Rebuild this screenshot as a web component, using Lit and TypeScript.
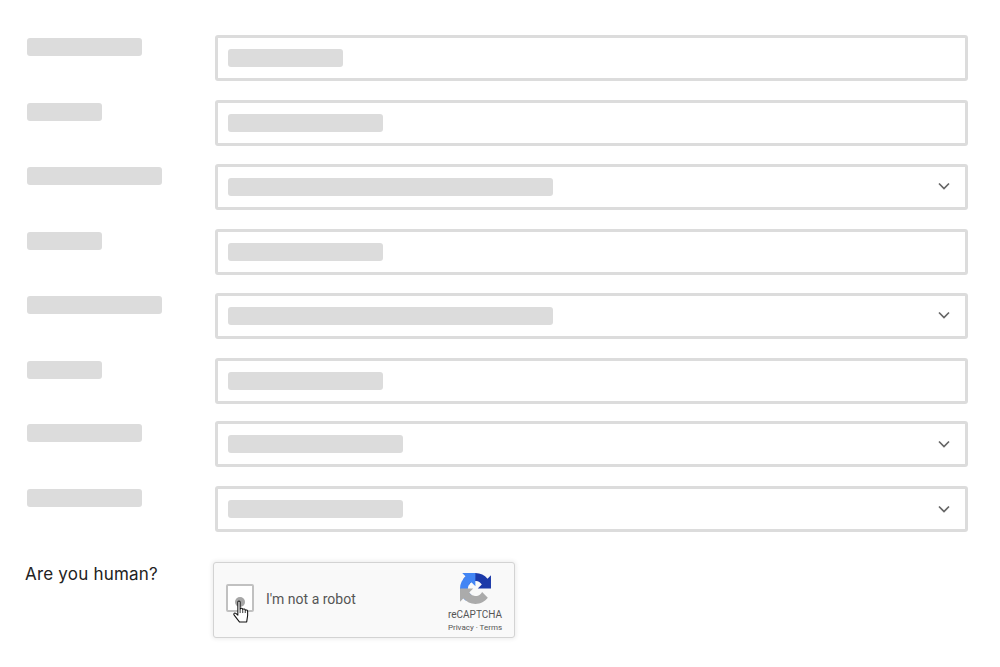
import { LitElement, html, css, svg } from "lit";
import { customElement } from "lit/decorators.js";
import { classMap } from "lit/directives/class-map.js";

interface Row { label: number; value: number; select: boolean; gap: number; low?: boolean }

const ROWS: Row[] = [
  { label: 115, value: 115, select: false, gap: 0 },
  { label: 75, value: 155, select: false, gap: 19 },
  { label: 135, value: 325, select: true, gap: 18 },
  { label: 75, value: 155, select: false, gap: 19 },
  { label: 135, value: 325, select: true, gap: 18 },
  { label: 75, value: 155, select: false, gap: 19 },
  { label: 115, value: 175, select: true, gap: 17, low: true },
  { label: 115, value: 175, select: true, gap: 19, low: true },
];

@customElement("app-root")
export class AppRoot extends LitElement {
  static styles = css`
    :host { display: block; background: #fff; height: 667px; overflow: hidden; font-family: "Roboto", sans-serif; }
    .form { padding: 35px 32px 0 27px; display: flex; flex-direction: column; }
    .row { display: grid; grid-template-columns: 188px 1fr; }
    .bar { display: block; height: 18px; background: #dcdcdc; border-radius: 3px; }
    .label { margin-top: 3px; }
    .field {
      box-sizing: border-box; height: 46px; border: 3px solid #dcdcdc; border-radius: 3px;
      padding-left: 10px; display: flex; align-items: center; justify-content: space-between;
    }
    .chev { width: 12px; height: 8px; margin: 0 15px 2px 0; flex: none; }
    .chev.low { margin-bottom: 0; }
    .human { display: grid; grid-template-columns: 188px auto; justify-content: start; padding: 30px 0 0 25px; }
    .q { font: 400 17px/20px "Inter", sans-serif; color: #222; margin-top: 2px; letter-spacing: 0.2px; }
    .captcha {
      box-sizing: border-box; width: 302px; height: 76px; background: #f9f9f9;
      border: 1px solid #d3d3d3; border-radius: 3px; box-shadow: 0 0 4px 1px rgba(0,0,0,0.08);
      display: flex; align-items: center; position: relative; padding-left: 12px;
    }
    .check { box-sizing: border-box; width: 28px; height: 28px; border: 2px solid #c1c1c1; border-radius: 2px; background: #fff; flex: none; margin-bottom: 4px; }
    .text { font: 400 14px/18px "Roboto", sans-serif; color: #555; margin: 0 0 2px 12px; }
    .dot { position: absolute; left: 21px; top: 34px; width: 10px; height: 10px; border-radius: 50%; background: #a6a6a6; }
    .hand { position: absolute; left: 18px; top: 37px; width: 20px; height: 24px; }
    .brand { position: absolute; right: 11px; top: 10px; width: 56px; display: flex; flex-direction: column; align-items: center; color: #555; }
    .logo { width: 31px; height: 31px; }
    .name { font: 400 10px/12px "Roboto", sans-serif; margin-top: 5px; }
    .links { font: 400 8px/10px "Roboto", sans-serif; margin-top: 2px; white-space: nowrap; }
  `;

  private chevron(low: boolean) {
    return html`<svg class=${classMap({ chev: true, low })} viewBox="0 0 12 8"><path d="M1 1.500 6 6.500 11 1.500" fill="none" stroke="#666" stroke-width="1.700"/></svg>`;
  }

  private logo() {
    return svg`<svg class="logo" viewBox="0 0 64 64">
      <path d="M64 31.955l-.033-1.37V4.687l-7.16 7.16C50.948 4.674 42.033.093 32.05.093c-10.4 0-19.622 4.96-25.458 12.64l11.736 11.86a15.55 15.55 0 0 1 4.754-5.334c2.05-1.6 4.952-2.906 8.968-2.906.485 0 .86.057 1.135.163 4.976.393 9.29 3.14 11.83 7.124l-8.307 8.307c10.522-.04 22.4-.066 27.295.005" fill="#1c3aa9"/>
      <path d="M31.862.094l-1.37.033H4.594l7.16 7.16C4.58 13.147 0 22.06 0 32.046c0 10.4 4.96 19.622 12.64 25.458l11.86-11.736a15.55 15.55 0 0 1-5.334-4.754c-1.6-2.05-2.906-4.952-2.906-8.968 0-.485.057-.86.163-1.135.393-4.976 3.14-9.29 7.124-11.83l8.307 8.307c-.04-10.522-.066-22.4.005-27.295" fill="#4285f4"/>
      <path d="M.001 32.045l.033 1.37v25.898l7.16-7.16c5.86 7.173 14.775 11.754 24.76 11.754 10.4 0 19.622-4.96 25.458-12.64l-11.736-11.86a15.55 15.55 0 0 1-4.754 5.334c-2.05 1.6-4.952 2.906-8.968 2.906-.485 0-.86-.057-1.135-.163-4.976-.393-9.29-3.14-11.83-7.124l8.307-8.307c-10.522.04-22.4.066-27.295-.005" fill="#ababab"/>
    </svg>`;
  }

  render() {
    return html`
      <div class="form">
        ${ROWS.map((r) => html`
          <div class="row" style="margin-top:${r.gap}px">
            <span class="bar label" style="width:${r.label}px"></span>
            <div class="field">
              <span class="bar" style="width:${r.value}px"></span>
              ${r.select ? this.chevron(!!r.low) : null}
            </div>
          </div>`)}
      </div>
      <div class="human">
        <div class="q">Are you human?</div>
        <div class="captcha">
          <div class="check"></div>
          <div class="text">I'm not a robot</div>
          <div class="dot"></div>
          <svg class="hand" viewBox="0 0 18 23">
            <path d="M5 2c0-1.500 2.200-1.500 2.200 0v6.500c1-1 2.300-.6 2.400.6 1-1 2.400-.5 2.500.7 1-.7 2.300-.1 2.300 1.200v3.800L13.500 21H6.500L1.500 14.500c-1-1.300.3-2.600 1.600-1.600L5 14.500V2Z" fill="#fff" stroke="#111" stroke-width="1" stroke-linejoin="round"/>
            <path d="M7.200 8.500v4M9.700 9.100v3.400M12.100 9.800v2.700" stroke="#111" stroke-width="0.800" fill="none"/>
          </svg>
          <div class="brand">
            ${this.logo()}
            <div class="name">reCAPTCHA</div>
            <div class="links">Privacy · Terms</div>
          </div>
        </div>
      </div>
    `;
  }
}
